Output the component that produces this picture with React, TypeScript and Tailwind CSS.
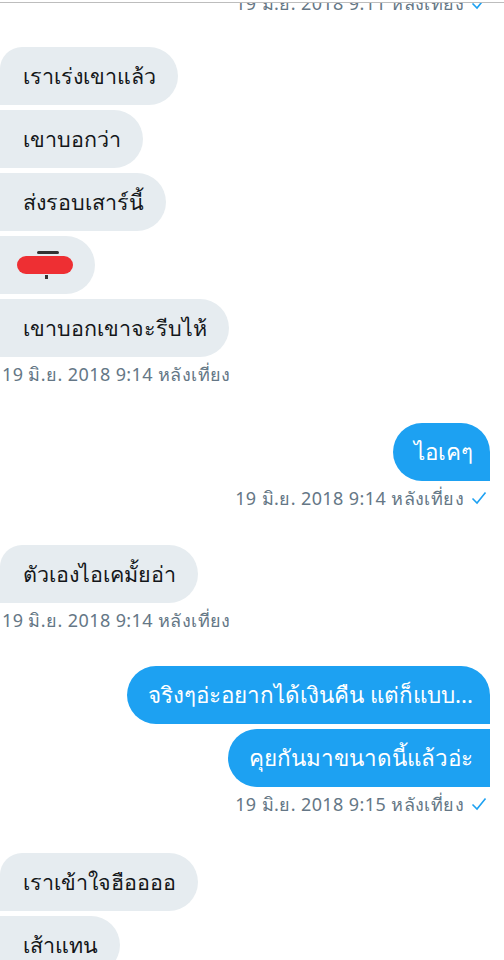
import { ReactNode } from 'react'

const font = { fontFamily: '"Noto Sans", Roboto, "Liberation Sans", sans-serif' }

function Check() {
  return (
    <svg width="16" height="14" viewBox="0 0 16 14" className="ml-[7px] inline-block">
      <polyline points="1.5,7.5 6,12 14.5,1.5" fill="none" stroke="#1da1f2" strokeWidth="1.6" />
    </svg>
  )
}

function Stamp({ text, sent = false }: { text: string; sent?: boolean }) {
  return (
    <div
      className={`flex items-center text-[18px] leading-[22px] tracking-[0.4px] text-[#657786] ${sent ? 'justify-end pr-[17px]' : 'justify-start pl-[2px]'}`}
    >
      <span>{text}</span>
      {sent && <Check />}
    </div>
  )
}

function In({ children, first = false }: { children: ReactNode; first?: boolean }) {
  return (
    <div className="flex">
      <div
        className={`h-[58px] flex items-center pl-[23px] pr-[22px] bg-[#e6ecf0] text-[#14171a] text-[21.5px] rounded-r-[29px] ${first ? 'rounded-tl-[22px]' : ''}`}
      >
        {children}
      </div>
    </div>
  )
}

function Out({ children, top = false }: { children: ReactNode; top?: boolean }) {
  return (
    <div className="flex justify-end pr-[14px]">
      <div
        className={`h-[58px] flex items-center pl-[21px] pr-[17px] bg-[#1da1f2] text-white text-[22.4px] rounded-l-[29px] ${top ? 'rounded-tr-[29px]' : ''}`}
      >
        {children}
      </div>
    </div>
  )
}

export default function App() {
  return (
    <div className="w-[504px] h-[960px] overflow-hidden bg-white" style={font}>
      <div className="h-[2px]" />
      <div className="h-[11px] overflow-hidden border-t border-[#bdbdbd]">
        <div className="-mt-[11px]">
          <Stamp text="19 มิ.ย. 2018 9:11 หลังเที่ยง" sent />
        </div>
      </div>

      <div className="mt-[34px] flex flex-col gap-[5px]">
        <In first>เราเร่งเขาแล้ว</In>
        <In>เขาบอกว่า</In>
        <In>ส่งรอบเสาร์นี้</In>
        <In>
          <span className="relative inline-flex w-[50px] h-[20px] items-center">
            <span className="absolute left-[14px] -top-[4px] w-[22px] h-[3px] bg-[#333] rounded-sm" />
            <span className="absolute left-[22px] -bottom-[4px] w-[3px] h-[4px] bg-[#333]" />
            <span className="w-[58px] h-[18px] -ml-[6px] rounded-full bg-[#ee2f33]" />
          </span>
        </In>
        <In>เขาบอกเขาจะรีบไห้</In>
      </div>
      <div className="mt-[6px]">
        <Stamp text="19 มิ.ย. 2018 9:14 หลังเที่ยง" />
      </div>

      <div className="mt-[38px]">
        <Out top>ไอเคๆ</Out>
      </div>
      <div className="mt-[6px]">
        <Stamp text="19 มิ.ย. 2018 9:14 หลังเที่ยง" sent />
      </div>

      <div className="mt-[36px]">
        <In first>ตัวเองไอเคมั้ยอ่า</In>
      </div>
      <div className="mt-[6px]">
        <Stamp text="19 มิ.ย. 2018 9:14 หลังเที่ยง" />
      </div>

      <div className="mt-[35px] flex flex-col gap-[5px]">
        <Out top>จริงๆอ่ะอยากได้เงินคืน แต่ก็แบบ...</Out>
        <Out>คุยกันมาขนาดนี้แล้วอ่ะ</Out>
      </div>
      <div className="mt-[6px]">
        <Stamp text="19 มิ.ย. 2018 9:15 หลังเที่ยง" sent />
      </div>

      <div className="mt-[38px] flex flex-col gap-[5px]">
        <In first>เราเข้าใจฮืออออ</In>
        <In>เส้าแทน</In>
      </div>
    </div>
  )
}
